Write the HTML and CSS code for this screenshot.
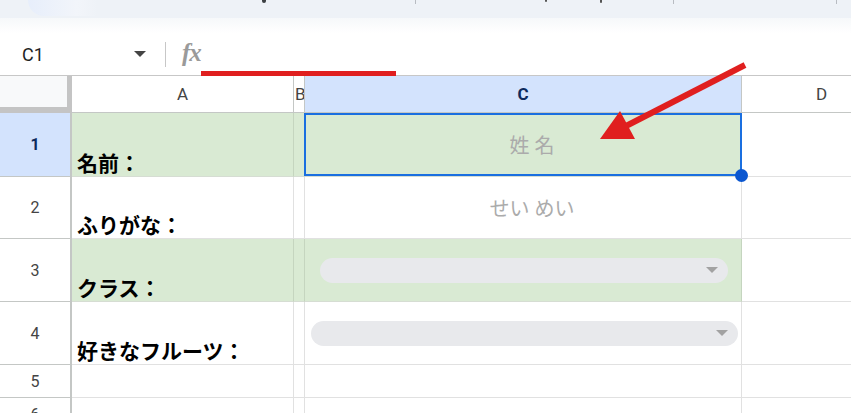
FILE: index.html
```html
<!DOCTYPE html>
<html lang="ja">
<head>
<meta charset="utf-8">
<title>シート</title>
<link rel="stylesheet" href="styles.css">
</head>
<body>
<div class="app">
  <div class="toolbar">
    <div class="tb-seg tb-seg-1"><div class="tb-blob"></div><span class="tick tick-g"></span></div>
    <div class="tb-seg tb-seg-2"><span class="tick tick-a"></span><span class="tick tick-b"></span></div>
    <div class="tb-seg tb-seg-3"></div>
    <div class="tb-seg tb-seg-4"></div>
  </div>
  <div class="shade"></div>

  <div class="formula">
    <div class="namebox"><span class="ref">C1</span><span class="caret"></span></div>
    <div class="fsep"></div>
    <span class="fx">fx</span>
  </div>

  <div class="sheet">
    <!-- column headers -->
    <div class="corner"></div>
    <div class="h">A</div>
    <div class="h h-b">B</div>
    <div class="h h-sel">C</div>
    <div class="h">D</div>

    <!-- row 1 -->
    <div class="rh rh-sel">1</div>
    <div class="c lbl green">名前：</div>
    <div class="c green"></div>
    <div class="c val green">姓 名</div>
    <div class="c"></div>

    <!-- row 2 -->
    <div class="rh">2</div>
    <div class="c lbl">ふりがな：</div>
    <div class="c"></div>
    <div class="c val">せい めい</div>
    <div class="c"></div>

    <!-- row 3 -->
    <div class="rh">3</div>
    <div class="c lbl green">クラス：</div>
    <div class="c green"></div>
    <div class="c dd dd-3 green"><div class="chip"></div></div>
    <div class="c"></div>

    <!-- row 4 -->
    <div class="rh">4</div>
    <div class="c lbl">好きなフルーツ：</div>
    <div class="c"></div>
    <div class="c dd dd-4"><div class="chip"></div></div>
    <div class="c"></div>

    <!-- row 5 -->
    <div class="rh">5</div>
    <div class="c"></div>
    <div class="c"></div>
    <div class="c"></div>
    <div class="c"></div>

    <!-- row 6 -->
    <div class="rh">6</div>
    <div class="c"></div>
    <div class="c"></div>
    <div class="c"></div>
    <div class="c"></div>

    <!-- active cell outline and fill handle -->
    <div class="selbox"></div>
    <div class="handle"></div>
  </div>

  <!-- red annotations drawn over the sheet -->
  <div class="underline"></div>
  <svg class="arrow" width="851" height="413" viewBox="0 0 851 413">
    <line x1="745" y1="65" x2="626" y2="126" stroke="#e01f1f" stroke-width="6"/>
    <polygon points="600,139 620,111 635,139" fill="#e01f1f"/>
  </svg>
</div>
</body>
</html>
```
FILE: styles.css
```css
* {
  box-sizing: border-box;
}

body {
  margin: 0;
  background: #fff;
  font-family: Roboto, "Noto Sans CJK JP", sans-serif;
  overflow: hidden;
}

.app {
  position: relative;
  width: 851px;
  height: 413px;
  overflow: hidden;
}

/* toolbar strip cut off at the top */
.toolbar {
  height: 18px;
  background: #eef2f7;
  display: flex;
  overflow: hidden;
}

.tb-seg {
  position: relative;
  height: 100%;
  display: flex;
}

.tb-seg::after {
  content: "";
  position: absolute;
  right: 0;
  top: 0;
  width: 1px;
  height: 4px;
  background: #b8bcc2;
}

.tb-seg-1 { width: 416px; }
.tb-seg-2 { width: 258px; }
.tb-seg-3 { width: 163px; }
.tb-seg-4 { flex: 1; }
.tb-seg-4::after { display: none; }

.tb-blob {
  width: 70px;
  height: 16px;
  margin-left: 28px;
  border-bottom-left-radius: 16px;
  background: linear-gradient(90deg, #e7eefb 0%, #f2f5fa 70%, #eef2f7 100%);
}

.tick {
  width: 4px;
  height: 3px;
  border-radius: 0 0 2px 2px;
  background: #3c4043;
}

.tick-g { margin-left: 164px; }
.tick-a { margin-left: 129px; width: 2px; height: 2px; background: #555; }
.tick-b { margin-left: 53px; width: 2px; height: 3px; background: #555; }

.shade {
  height: 15px;
  background: linear-gradient(#f6f8fa, #ffffff);
}

/* name box + formula input */
.formula {
  height: 43px;
  display: flex;
  align-items: center;
  border-bottom: 1px solid #c7c7c7;
}

.namebox {
  width: 165px;
  height: 100%;
  display: flex;
  align-items: center;
  justify-content: space-between;
  padding: 0 19px 0 22px;
}

.ref {
  font-size: 18px;
  color: #1f1f1f;
}

.caret {
  width: 0;
  height: 0;
  border-left: 6px solid transparent;
  border-right: 6px solid transparent;
  border-top: 6px solid #444;
}

.fsep {
  width: 1px;
  height: 25px;
  background: #c7c7c7;
}

.fx {
  margin-left: 16px;
  margin-top: -2px;
  font-family: "Liberation Serif", serif;
  font-style: italic;
  font-weight: bold;
  font-size: 25px;
  color: #9a9a9a;
  letter-spacing: -1px;
}

/* grid */
.sheet {
  position: relative;
  display: grid;
  grid-template-columns: 72px 222px 11px 437px 160px;
  grid-template-rows: 37px 64px 62px 63px 63px 33px 33px;
}

.corner {
  background: #f8f9fa;
  border-right: 5px solid #c4c4c4;
  border-bottom: 6px solid #c4c4c4;
}

.h {
  display: flex;
  align-items: center;
  justify-content: center;
  font-size: 17px;
  color: #444;
  border-right: 1px solid #c4c7c5;
  border-bottom: 1px solid #c4c7c5;
  overflow: hidden;
}

.h-b {
  justify-content: flex-start;
  padding-left: 1px;
}

.h-sel {
  background: #d3e3fd;
  color: #0c2a5c;
  font-weight: bold;
}

.rh {
  display: flex;
  align-items: center;
  justify-content: center;
  font-size: 16px;
  color: #444;
  border-right: 2px solid #c4c7c5;
  border-bottom: 1px solid #c4c7c5;
}

.rh-sel {
  background: #d3e3fd;
  color: #0c2a5c;
  font-weight: bold;
}

.c {
  border-right: 1px solid #e1e1e1;
  border-bottom: 1px solid #e1e1e1;
  overflow: hidden;
}

.green {
  background: #d9ead3;
  border-right-color: #c5d5bf;
  border-bottom-color: #d6ddd3;
}

.lbl {
  display: flex;
  align-items: flex-end;
  padding: 0 4px 1px 5px;
  font-family: "Noto Sans CJK JP", sans-serif;
  font-weight: bold;
  font-size: 21px;
  line-height: 26px;
  color: #000;
  white-space: nowrap;
}

.val {
  display: flex;
  align-items: center;
  justify-content: center;
  padding-left: 18px;
  font-family: Roboto, "Noto Sans CJK JP", sans-serif;
  font-size: 20px;
  color: #ababab;
}

.dd {
  display: flex;
  align-items: center;
}

.dd-3 { padding: 0 13px 0 15px; }
.dd-4 { padding: 0 3px 0 6px; }

.chip {
  flex: 1;
  height: 25px;
  border-radius: 13px;
  background: #e8e9ec;
  display: flex;
  align-items: center;
  justify-content: flex-end;
  padding-right: 10px;
}

.chip::after {
  content: "";
  width: 0;
  height: 0;
  border-left: 6px solid transparent;
  border-right: 6px solid transparent;
  border-top: 6px solid #a2a2a2;
}

.selbox {
  position: absolute;
  left: 304px;
  top: 37px;
  width: 438px;
  height: 63px;
  border: 2.5px solid #1a6fe0;
  pointer-events: none;
}

.handle {
  position: absolute;
  left: 735px;
  top: 93px;
  width: 13px;
  height: 13px;
  border-radius: 50%;
  background: #0b57d0;
}

.underline {
  position: absolute;
  left: 201px;
  top: 71px;
  width: 195px;
  height: 5px;
  background: #e01f1f;
}

.arrow {
  position: absolute;
  left: 0;
  top: 0;
  pointer-events: none;
}
```
